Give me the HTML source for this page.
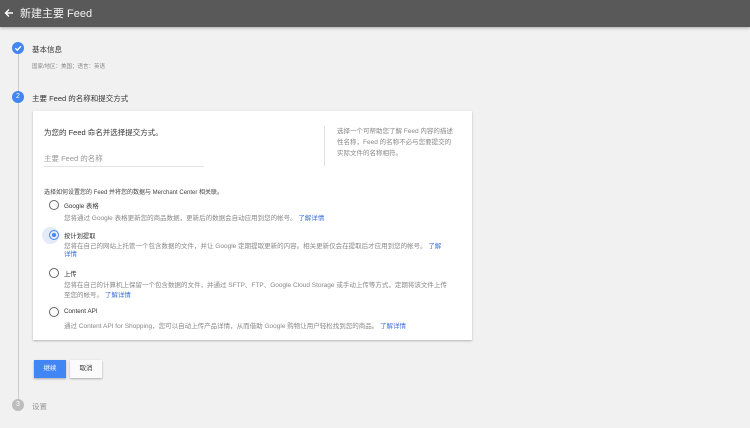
<!DOCTYPE html>
<html><head><meta charset="utf-8"><style>
*{margin:0;padding:0;box-sizing:border-box}
body{width:750px;height:428px;overflow:hidden;background:#f1f1f1;font-family:"Liberation Sans","Noto Sans CJK SC",sans-serif;color:#333;position:relative}
.a{position:absolute;white-space:nowrap}
.hdr{position:absolute;left:0;top:0;width:750px;height:27px;background:#595959;box-shadow:0 1px 3px rgba(0,0,0,.3)}
.circ{position:absolute;width:12px;height:12px;border-radius:50%;color:#fff;font-size:7px;text-align:center;line-height:12px}
.card{position:absolute;left:33px;top:111px;width:439px;height:229px;background:#fff;box-shadow:0 1px 2px rgba(0,0,0,.25)}
.radio{position:absolute;width:10px;height:10px;border:1.3px solid #666;border-radius:50%}
.s{font-size:6.5px;color:#888}
.l{color:#3b6fd8}
</style></head><body>
<div class="hdr"></div>
<svg class="a" style="left:4px;top:8px" width="10" height="10" viewBox="0 0 10 10"><path d="M9 5H2M5 1.5L1.5 5 5 8.5" stroke="#fff" stroke-width="1.4" fill="none"/></svg>
<div class="a" style="left:20px;top:5px;font-size:11px;color:#f4f4f4">新建主要 Feed</div>
<div class="a" style="left:18px;top:54px;width:1px;height:345px;background:#ccc"></div>
<div class="circ" style="left:12px;top:42px;background:#4285f4"><svg width="12" height="12" viewBox="0 0 12 12"><path d="M3.3 6.2l2 2 3.6-4" stroke="#fff" stroke-width="1.4" fill="none"/></svg></div>
<div class="a" style="left:32px;top:44px;font-size:7.5px">基本信息</div>
<div class="a s" style="left:32px;top:62px;font-size:5.5px">国家/地区：美国；语言：英语</div>
<div class="circ" style="left:12px;top:91px;background:#4285f4">2</div>
<div class="a" style="left:32px;top:93px;font-size:7.5px">主要 Feed 的名称和提交方式</div>
<div class="card"></div>
<div class="a" style="left:44px;top:127px;font-size:7.5px">为您的 Feed 命名并选择提交方式。</div>
<div class="a" style="left:324px;top:126px;width:1px;height:40px;background:#e0e0e0"></div>
<div class="a s" style="left:337px;top:126px;line-height:11px">选择一个可帮助您了解 Feed 内容的描述<br>性名称，Feed 的名称不必与您要提交的<br>实际文件的名称相符。</div>
<div class="a" style="left:44px;top:153px;font-size:7.5px;color:#999">主要 Feed 的名称</div>
<div class="a" style="left:44px;top:166px;width:160px;height:1px;background:#e3e3e3"></div>
<div class="a" style="left:44px;top:187px;font-size:6px;color:#444">选择如何设置您的 Feed 并将您的数据与 Merchant Center 相关联。</div>
<div class="radio" style="left:49px;top:200px"></div>
<div class="a" style="left:64px;top:201px;font-size:6.3px">Google 表格</div>
<div class="a s" style="left:64px;top:212px">您将通过 Google 表格更新您的商品数据，更新后的数据会自动应用到您的帐号。 <span class="l">了解详情</span></div>
<div class="a" style="left:42px;top:227px;width:17px;height:17px;border-radius:50%;background:#e4ebf8"></div>
<div class="radio" style="left:49px;top:230px;border-color:#4285f4"></div>
<div class="a" style="left:52px;top:233px;width:4px;height:4px;border-radius:50%;background:#4285f4"></div>
<div class="a" style="left:64px;top:231px;font-size:6.3px">按计划提取</div>
<div class="a s" style="left:64px;top:243px;line-height:8px">您将在自己的网站上托管一个包含数据的文件，并让 Google 定期提取更新的内容。相关更新仅会在提取后才应用到您的帐号。 <span class="l">了解</span><br><span class="l">详情</span></div>
<div class="radio" style="left:49px;top:268px"></div>
<div class="a" style="left:64px;top:269px;font-size:6.3px">上传</div>
<div class="a s" style="left:64px;top:281px;line-height:10px">您将在自己的计算机上保留一个包含数据的文件，并通过 SFTP、FTP、Google Cloud Storage 或手动上传等方式，定期将该文件上传<br>至您的帐号。 <span class="l">了解详情</span></div>
<div class="radio" style="left:49px;top:307px"></div>
<div class="a" style="left:64px;top:308px;font-size:6.3px">Content API</div>
<div class="a s" style="left:64px;top:320px">通过 Content API for Shopping，您可以自动上传产品详情，从而借助 Google 购物让用户轻松找到您的商品。 <span class="l">了解详情</span></div>
<div class="a" style="left:34px;top:360px;width:32px;height:18px;background:#4285f4;color:#fff;font-size:6.5px;text-align:center;line-height:18px;box-shadow:0 1px 2px rgba(0,0,0,.3)">继续</div>
<div class="a" style="left:70px;top:360px;width:32px;height:18px;background:#fafafa;color:#333;font-size:6.5px;text-align:center;line-height:18px;box-shadow:0 1px 2px rgba(0,0,0,.3)">取消</div>
<div class="circ" style="left:12px;top:399px;background:#bdbdbd">3</div>
<div class="a" style="left:32px;top:401px;font-size:7.5px;color:#999">设置</div>
</body></html>
